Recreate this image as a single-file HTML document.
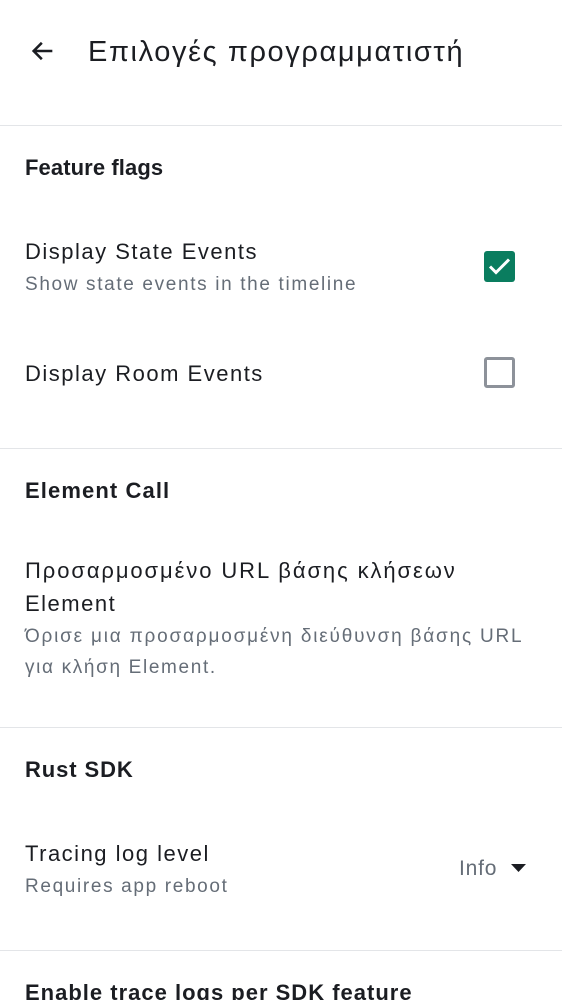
<!DOCTYPE html>
<html><head><meta charset="utf-8"><style>
html,body{margin:0;padding:0;background:#fff;width:562px;height:1000px;overflow:hidden;position:relative;font-family:"Liberation Sans","DejaVu Sans",sans-serif;color:#1b1d22}
.t{position:absolute;left:25px;white-space:nowrap;line-height:30px;height:30px}
.h{font-size:22px;font-weight:bold;letter-spacing:0.3px}
.b{font-size:22px;letter-spacing:1.5px}
.s{font-size:19px;color:#656d77;letter-spacing:1.65px}
.d{position:absolute;left:0;width:562px;height:1px;background:#e3e5e8}
</style></head><body>
<svg style="position:absolute;left:29px;top:37px" width="28" height="28" viewBox="0 0 24 24"><path d="M20 12H5M11 5l-7 7 7 7" fill="none" stroke="#1b1d22" stroke-width="2.2"/></svg>
<div class="t" style="left:88px;top:34px;height:36px;line-height:36px;font-size:29px;letter-spacing:1.6px">Επιλογές προγραμματιστή</div>
<div class="d" style="top:125px"></div>
<div class="t h" style="top:153px;letter-spacing:0.1px">Feature flags</div>
<div class="t b" style="top:237px">Display State Events</div>
<div class="t s" style="top:270px">Show state events in the timeline</div>
<div style="position:absolute;left:484px;top:251px;width:31px;height:31px;background:#0a7d5f;border-radius:3px"></div>
<svg style="position:absolute;left:484px;top:251px" width="31" height="31" viewBox="0 0 31 31"><path d="M6 15.5l6 6L25 8.5" fill="none" stroke="#fff" stroke-width="3"/></svg>
<div class="t b" style="top:359px">Display Room Events</div>
<div style="position:absolute;left:484px;top:357px;width:25px;height:25px;border:3px solid #8d929a;border-radius:3px"></div>
<div class="d" style="top:448px"></div>
<div class="t h" style="top:476px;letter-spacing:1.1px">Element Call</div>
<div class="t b" style="top:556px;letter-spacing:1.9px">Προσαρμοσμένο URL βάσης κλήσεων</div>
<div class="t b" style="top:589px">Element</div>
<div class="t s" style="top:622px;letter-spacing:1.8px">Όρισε μια προσαρμοσμένη διεύθυνση βάσης URL</div>
<div class="t s" style="top:653px">για κλήση Element.</div>
<div class="d" style="top:727px"></div>
<div class="t h" style="top:755px;letter-spacing:0.9px">Rust SDK</div>
<div class="t b" style="top:839px">Tracing log level</div>
<div class="t s" style="top:872px">Requires app reboot</div>
<div class="t s" style="left:459px;top:854px;font-size:21px;letter-spacing:0.8px;color:#656d77">Info</div>
<svg style="position:absolute;left:511px;top:864px" width="15" height="8" viewBox="0 0 15 8"><path d="M0 0h15L7.5 8z" fill="#1b1d22"/></svg>
<div class="d" style="top:950px"></div>
<div class="t h" style="top:978px;letter-spacing:1px">Enable trace logs per SDK feature</div>
</body></html>
